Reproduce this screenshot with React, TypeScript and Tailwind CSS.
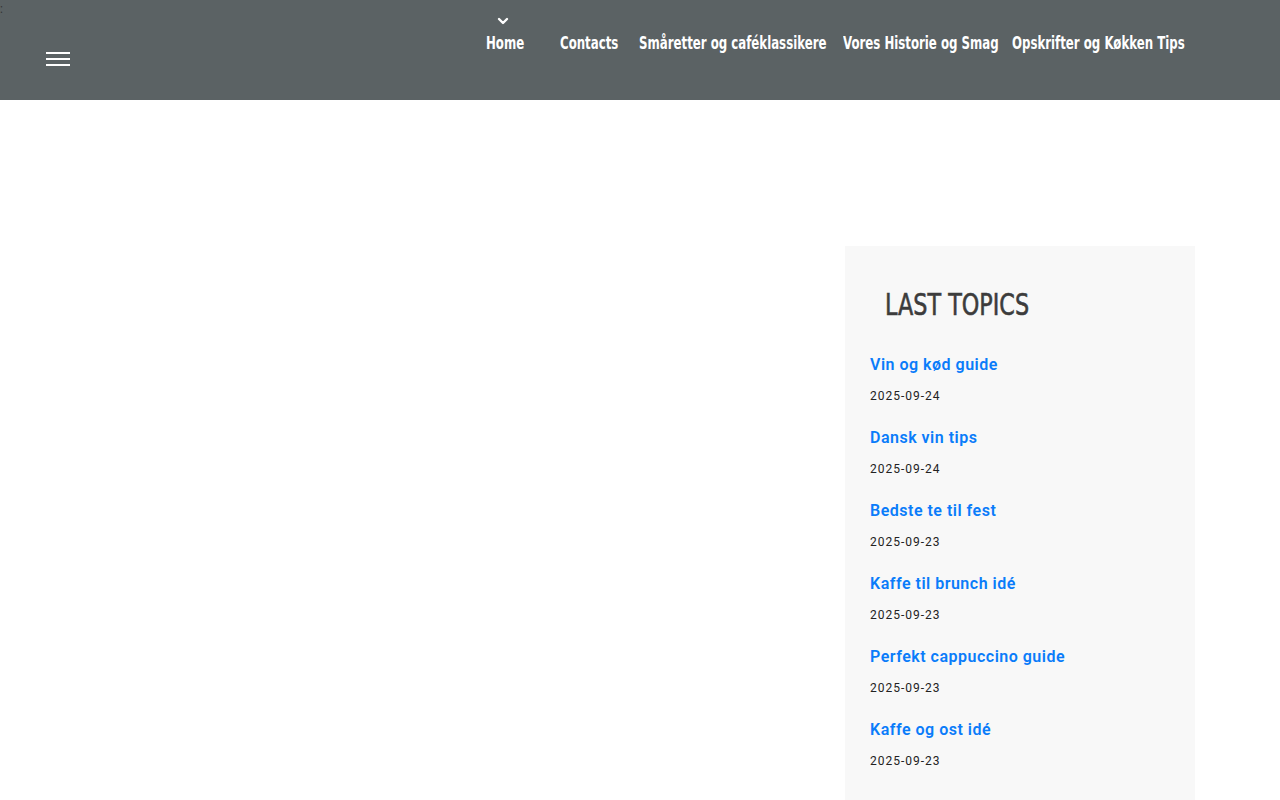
import React from 'react';

const topics = [
  { title: 'Vin og kød guide', date: '2025-09-24' },
  { title: 'Dansk vin tips', date: '2025-09-24' },
  { title: 'Bedste te til fest', date: '2025-09-23' },
  { title: 'Kaffe til brunch idé', date: '2025-09-23' },
  { title: 'Perfekt cappuccino guide', date: '2025-09-23' },
  { title: 'Kaffe og ost idé', date: '2025-09-23' },
];

const navItems = [
  { label: 'Contacts', w: 'w-[79px]' },
  { label: 'Småretter og caféklassikere', w: 'w-[204px]' },
  { label: 'Vores Historie og Smag', w: 'w-[169px]' },
  { label: 'Opskrifter og Køkken Tips', w: 'w-[190px]' },
];

// no Oswald offline: condensed DejaVu, squeezed a little more
const navFont = { fontFamily: '"DejaVu Sans Condensed", "DejaVu Sans", sans-serif' };

const App: React.FC = () => {
  return (
    <div className="relative min-h-screen bg-white" style={{ fontFamily: 'Roboto, "Liberation Sans", sans-serif' }}>
      <span className="absolute left-0 top-[3px] text-[12px] leading-none text-[#333] z-10">:</span>
      <header className="h-[100px] bg-[#5b6264] flex items-start">
        <button className="ml-[46px] mt-[52px] flex flex-col gap-[4px]">
          <span className="block w-[24px] h-[2px] bg-white" />
          <span className="block w-[24px] h-[2px] bg-white" />
          <span className="block w-[24px] h-[2px] bg-white" />
        </button>
        <nav className="ml-[416px] flex items-start text-white text-[17px] font-bold font-stretch-condensed whitespace-nowrap" style={navFont}>
          <div className="relative pt-[31px] w-[74px]">
            <svg className="absolute left-[11px] top-[16px] w-[12px] h-[10px]" viewBox="0 0 12 10" fill="none">
              <path d="M2 3l4 4 4-4" stroke="white" strokeWidth="2.4" strokeLinecap="round" strokeLinejoin="round" />
            </svg>
            <a href="#" className="inline-block origin-left scale-x-[0.77]">Home</a>
          </div>
          {navItems.map((n) => (
            <div key={n.label} className={`pt-[31px] ${n.w}`}>
              <a href="#" className="inline-block origin-left scale-x-[0.77]">{n.label}</a>
            </div>
          ))}
        </nav>
      </header>
      <main className="flex">
        <div className="w-[845px]" />
        <aside className="mt-[146px] w-[350px] bg-[#f8f8f8] pt-[38px] pb-[30px] min-h-[560px]">
          <h2 className="ml-[40px] text-[31px] leading-[40px] text-[#3c3c3c] font-stretch-condensed whitespace-nowrap" style={navFont}>
            <span className="inline-block origin-left scale-x-[0.8] [-webkit-text-stroke:0.6px_#3c3c3c]">LAST TOPICS</span>
          </h2>
          <ul className="mt-[31px] ml-[25px] flex flex-col gap-[24px]">
            {topics.map((t) => (
              <li key={t.title}>
                <a href="#" className="block text-[16px] leading-[20px] font-semibold text-[#0a7cfa] tracking-[0.5px]">{t.title}</a>
                <div className="mt-[13px] text-[12px] leading-[16px] text-[#222] tracking-[1px]">{t.date}</div>
              </li>
            ))}
          </ul>
        </aside>
      </main>
    </div>
  );
};

export default App;
